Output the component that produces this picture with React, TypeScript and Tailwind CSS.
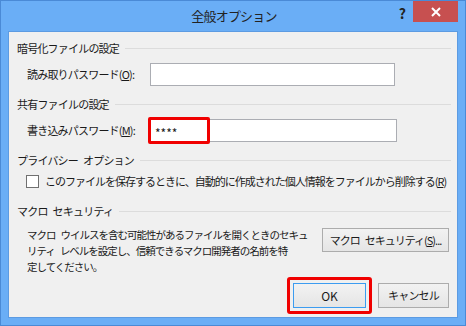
import type { ReactNode } from "react";

export default function App() {
  return (
    <div
      className="w-[466px] h-[326px] bg-[#6aaef6] border border-[#4a8ad6] flex flex-col text-[#1a1a1a]"
      style={{ fontFamily: '"Noto Sans CJK JP", "Noto Sans", sans-serif' }}
    >
      {/* Title bar */}
      <div className="h-[30px] flex items-start relative">
        <div className="flex-1 h-[30px] flex items-center justify-center text-[13px] tracking-[-0.8px] pl-[2px] text-[#222]">
          全般オプション
        </div>
        <div className="absolute top-[5px] right-[59px] text-[14px] font-bold text-[#222] leading-none">?</div>
        <div className="absolute right-[7px] top-[0px] w-[45px] h-[21px] bg-[#c75050] flex items-center justify-center">
          <svg width="10" height="10" viewBox="0 0 10 10">
            <path d="M1 1 L9 9 M9 1 L1 9" stroke="#fff" strokeWidth="2" />
          </svg>
        </div>
      </div>

      {/* Content */}
      <div className="mx-[7px] h-[287px] bg-[#f0f0f0] border border-[#5c9be2] flex flex-col text-[11px] tracking-[-0.8px] leading-none">
        <SectionHeader title="暗号化ファイルの設定" className="mt-[8px]" />
        <div className="mt-[7px] h-[23px] flex items-center pl-[18px]">
          <span className="w-[123px]">
            読み取りパスワード(<u>O</u>):
          </span>
          <div className="w-[245px] h-[23px] bg-white border border-[#abadb3]" />
        </div>

        <SectionHeader title="共有ファイルの設定" className="mt-[10px]" />
        <div className="mt-[7px] h-[23px] flex items-center pl-[18px]">
          <span className="w-[123px]">
            書き込みパスワード(<u>M</u>):
          </span>
          <div className="relative w-[247px] h-[23px] bg-white border border-[#abadb3] flex items-center pl-[4px] text-[12px] tracking-[0px]">
            <span className="pt-[4px]">****</span>
            <div className="absolute left-[-3px] top-[-3px] w-[62px] h-[27px] border-[3px] border-[#f00000] rounded-[2px]" />
          </div>
        </div>

        <SectionHeader title={<>プライバシー<Gap />オプション</>} className="mt-[10px]" />
        <div className="mt-[7px] h-[13px] flex items-center pl-[17px]">
          <div className="w-[13px] h-[13px] bg-white border border-[#707070]" />
          <span className="ml-[6px] whitespace-nowrap tracking-[-1px]">
            このファイルを保存するときに、自動的に作成された個人情報をファイルから削除する(<u>R</u>)
          </span>
        </div>

        <SectionHeader title={<>マクロ<Gap />セキュリティ</>} className="mt-[15px]" />
        <div className="mt-[9px] flex items-start pl-[18px] pr-[8px]">
          <div className="leading-[16px] mt-[-1px] whitespace-nowrap text-[10.5px] tracking-[-1px]">
            <div>マクロ<Gap />ウイルスを含む可能性があるファイルを開くときのセキュ</div>
            <div>リティ<Gap />レベルを設定し、信頼できるマクロ開発者の名前を特</div>
            <div>定してください。</div>
          </div>
          <div className="ml-auto shrink-0">
            <Button className="w-[127px] h-[24px] tracking-[-1px]">
              マクロ<Gap />セキュリティ(<u>S</u>)...
            </Button>
          </div>
        </div>

        <div className="mt-auto mb-[9px] flex justify-end items-center pr-[8px] gap-[12px]">
          <div className="relative">
            <div className="w-[73px] h-[25px] bg-gradient-to-b from-[#f2f2f2] to-[#e5e5e5] border border-[#3c9cf0] flex items-center justify-center text-[12px] tracking-[0px]">
              OK
            </div>
            <div className="absolute left-[-6px] top-[-6px] w-[85px] h-[37px] border-[3px] border-[#f00000] rounded-[3px]" />
          </div>
          <Button className="w-[71px] h-[25px]">キャンセル</Button>
        </div>
      </div>
    </div>
  );
}

function Gap() {
  return <span className="inline-block w-[5px]"> </span>;
}

function SectionHeader({ title, className = "" }: { title: ReactNode; className?: string }) {
  return (
    <div className={`h-[16px] flex items-center pl-[8px] pr-[6px] ${className}`}>
      <span className="whitespace-nowrap">{title}</span>
      <div className="flex-1 ml-[6px] h-px bg-[#dcdcdc]" />
    </div>
  );
}

function Button({ children, className = "" }: { children: ReactNode; className?: string }) {
  return (
    <div
      className={`bg-gradient-to-b from-[#f2f2f2] to-[#e5e5e5] border border-[#acacac] flex items-center justify-center ${className}`}
    >
      <span className="whitespace-nowrap">{children}</span>
    </div>
  );
}
